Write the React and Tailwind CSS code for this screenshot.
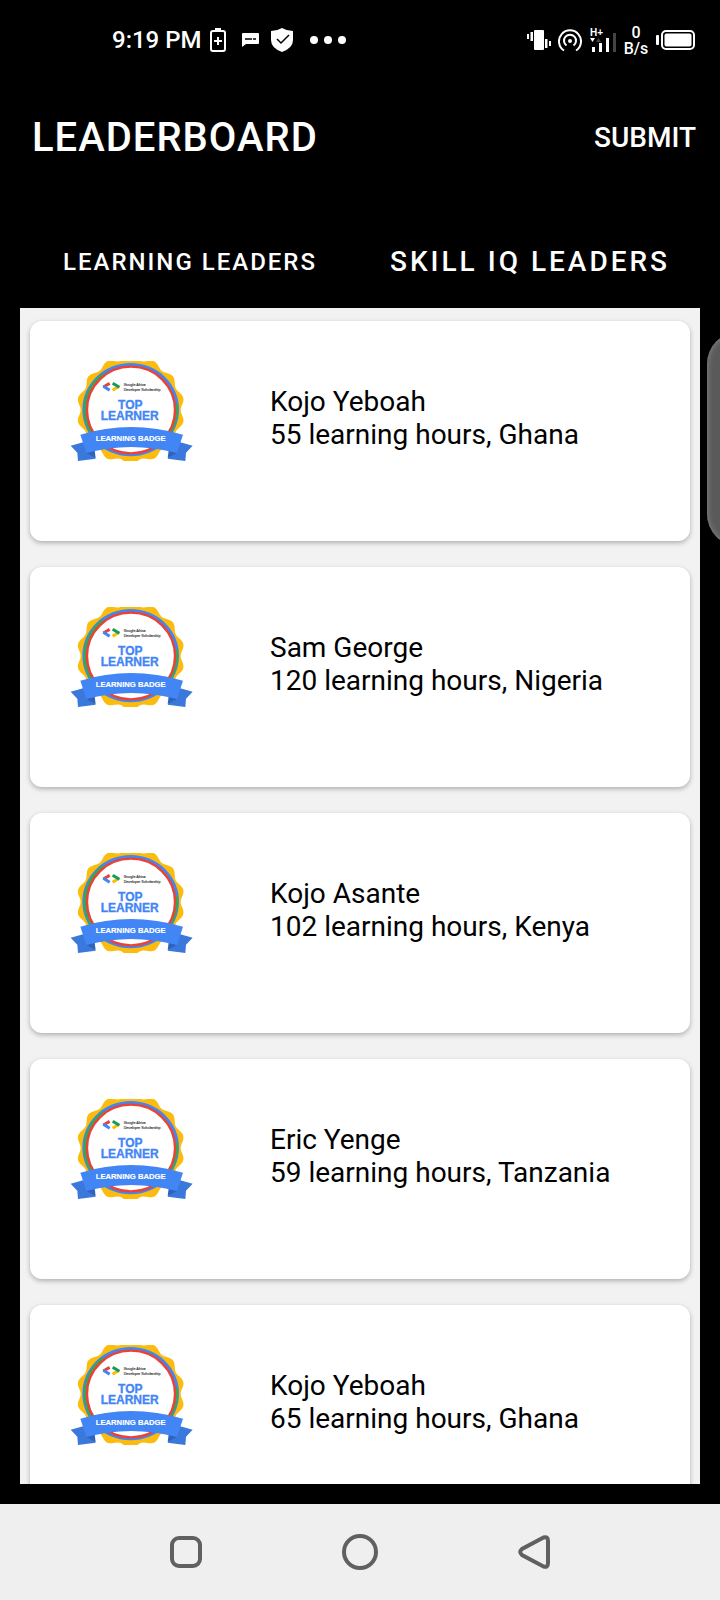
import React from "react";

const learners = [
  { name: "Kojo Yeboah", hours: 55, country: "Ghana" },
  { name: "Sam George", hours: 120, country: "Nigeria" },
  { name: "Kojo Asante", hours: 102, country: "Kenya" },
  { name: "Eric Yenge", hours: 59, country: "Tanzania" },
  { name: "Kojo Yeboah", hours: 65, country: "Ghana" },
];

// Fourteen-lobed edge of the gold seal.
const sealPath =
  Array.from({ length: 281 }, (_, i) => {
    const a = (i / 280) * Math.PI * 2;
    const r = 156 - 6 * Math.cos(14 * a);
    const x = (212 + r * Math.cos(a)).toFixed(1);
    const y = (180 + r * Math.sin(a)).toFixed(1);
    return `${i ? "L" : "M"}${x} ${y}`;
  }).join("") + "Z";

function Badge() {
  return (
    <svg viewBox="30 33 369 300" className="h-[100px] w-[123px] shrink-0" role="img" aria-label="Top Learner learning badge">
      <path d={sealPath} fill="#fcbc0d" />
      <ellipse cx="212" cy="179" rx="145" ry="140" fill="#4285f4" />
      <path d="M130 72A140 135 0 0 0 130 288M349 160A140 135 0 0 1 310 275" fill="none" stroke="#34a853" strokeWidth="7" />
      <ellipse cx="213" cy="180" rx="132" ry="130" fill="#fff" stroke="#ea4335" strokeWidth="7" />
      <g fill="none" strokeWidth="9">
        <path d="M149 100L130 111" stroke="#ea4335" />
        <path d="M130 109L149 121" stroke="#4285f4" />
        <path d="M177 109L158 121" stroke="#fbbc04" />
        <path d="M158 100L178 112" stroke="#0f9d58" />
      </g>
      <g className="font-['Liberation_Sans',sans-serif]">
        <text x="191" y="107" fontSize="11" fill="#333" stroke="#333" strokeWidth="0.4">Google Africa</text>
        <text x="191" y="122" fontSize="11" fill="#333" stroke="#333" strokeWidth="0.4">Developer Scholarship</text>
        <text fontSize="36" fontWeight="700" textAnchor="middle" fill="#4285f4" stroke="#4285f4">
          <tspan x="211" y="177">TOP</tspan>
          <tspan x="209" y="210">LEARNER</tspan>
        </text>
      </g>
      <path d="M32 287L80 274L107 326L54 333L52 308Z" fill="#3b78dc" />
      <path d="M398 287L350 274L323 326L376 333L378 308Z" fill="#3b78dc" />
      <path d="M79 309L104 301L107 324Z" fill="#2f62bb" />
      <path d="M351 309L326 301L323 324Z" fill="#2f62bb" />
      <path d="M61 254Q212 208 369 254L351 309Q212 273 79 309Z" fill="#4285f4" />
      <text x="212" y="273" fontSize="23" fontWeight="700" textAnchor="middle" fill="#fff" stroke="#fff" strokeWidth="0.5" className="font-['Liberation_Sans',sans-serif]">LEARNING BADGE</text>
    </svg>
  );
}

function StatusBar() {
  return (
    <div className="flex h-20 shrink-0 items-center justify-between pr-[25px] pl-28">
      <div className="flex items-center">
        <time className="text-2xl font-medium">9:19 PM</time>
        <svg viewBox="0 0 16 24" className="ml-2 h-6 w-4" aria-hidden="true">
          <path d="M5 0h6v3H5z" fill="#fff" />
          <rect x="1" y="3" width="14" height="20" rx="2" fill="none" stroke="#fff" strokeWidth="2" />
          <path d="M8 9v8M4 13h8" stroke="#fff" strokeWidth="2" />
        </svg>
        <svg viewBox="0 0 17 14" className="ml-4 h-3.5 w-[17px]" aria-hidden="true">
          <path d="M1 0h15q1 0 1 1v9q0 1-1 1H4l-4 3V1q0-1 1-1z" fill="#fff" />
          <path d="M3 6h7M11 6h3" stroke="#000" strokeWidth="1.4" />
        </svg>
        <svg viewBox="0 0 22 24" className="ml-3 h-6 w-[22px]" aria-hidden="true">
          <path d="M11 0Q16 3 22 3V12Q22 20 11 24Q0 20 0 12V3Q6 3 11 0z" fill="#fff" />
          <path d="M6 11l4 4 8-8" fill="none" stroke="#000" strokeWidth="1.5" />
        </svg>
        <svg viewBox="0 0 36 8" className="ml-[17px] h-2 w-9" fill="#fff" aria-hidden="true">
          <circle cx="4" cy="4" r="4" />
          <circle cx="18" cy="4" r="4" />
          <circle cx="32" cy="4" r="4" />
        </svg>
      </div>
      <div className="flex items-center">
        <svg viewBox="0 0 24 22" className="h-[22px] w-6" fill="#fff" aria-hidden="true">
          <rect x="7" y="1" width="10" height="20" rx="1" />
          <path d="M0 5h2v5H0zM3.500 3h2.500v9H3.500zM18 10h2.500v9H18zM22 12h2v5h-2z" />
        </svg>
        <svg viewBox="0 0 24 24" className="ml-[7px] h-6 w-6" fill="none" stroke="#fff" strokeWidth="2" aria-hidden="true">
          <path d="M6 22.500A11 11 0 1 1 18 22.500" />
          <path d="M8.500 17.500A6 6 0 1 1 15.500 17.500" />
          <circle cx="12" cy="13" r="2" fill="#fff" stroke="none" />
        </svg>
        <svg viewBox="0 0 26 24" className="ml-2 h-6 w-[26px] overflow-visible" aria-hidden="true">
          <text x="0" y="8" fontSize="10" fontWeight="700" fill="#fff" className="font-['Liberation_Sans',sans-serif]">H+</text>
          <path d="M0 10h5l-2.500 4z" fill="#fff" />
          <path d="M6 14h5l-2.500-4z" fill="#444" />
          <path d="M2 19h3v5H2zM9 15h3v9H9zM16 10h3v14h-3z" fill="#fff" />
          <path d="M23 5h3v19h-3z" fill="#444" />
        </svg>
        <div className="ml-2 flex w-6 flex-col items-center pt-0.5 text-base leading-4 font-medium">
          <span>0</span>
          <span>B/s</span>
        </div>
        <svg viewBox="0 0 39 20" className="ml-2 h-5 w-[39px]" aria-hidden="true">
          <rect x="0" y="5" width="3" height="10" rx="1" fill="#fff" />
          <rect x="6" y="1" width="32" height="18" rx="4" fill="none" stroke="#fff" strokeWidth="2" />
          <rect x="8.500" y="3.500" width="27" height="13" rx="2" fill="#fff" />
        </svg>
      </div>
    </div>
  );
}

function LearnerCard({ name, hours, country }) {
  return (
    <li className="flex h-[220px] shrink-0 items-start rounded-xl bg-white p-10 shadow-[0_2px_5px_rgba(0,0,0,0.28)]">
      <Badge />
      <div className="mt-6 ml-[77px] text-[28px] leading-[33px] text-black">
        <h2>{name}</h2>
        <p>
          {hours} learning hours, {country}
        </p>
      </div>
    </li>
  );
}

function SystemNav() {
  return (
    <nav aria-label="System" className="flex h-24 shrink-0 items-center justify-center gap-[134px] bg-[#efefef]">
      <button type="button" aria-label="Recent apps">
        <svg viewBox="0 0 40 40" className="h-10 w-10" fill="none" stroke="#606060" strokeWidth="4">
          <rect x="6" y="6" width="28" height="28" rx="7" />
        </svg>
      </button>
      <button type="button" aria-label="Home">
        <svg viewBox="0 0 40 40" className="h-10 w-10" fill="none" stroke="#606060" strokeWidth="4">
          <circle cx="20" cy="20" r="16" />
        </svg>
      </button>
      <button type="button" aria-label="Back">
        <svg viewBox="0 0 40 40" className="h-10 w-10" fill="none" stroke="#606060" strokeWidth="4">
          <path d="M29.500 5.500L8 17Q4.500 20 8 23L29.500 34.500Q34 36 34 31V9Q34 4 29.500 5.500Z" />
        </svg>
      </button>
    </nav>
  );
}

export default function App() {
  return (
    <div className="relative flex h-screen flex-col overflow-hidden bg-black font-[Roboto,sans-serif] text-white">
      <StatusBar />
      <header className="flex h-28 shrink-0 items-center justify-between pt-1 pr-6 pl-8">
        <h1 className="text-[40px] leading-[48px] font-medium tracking-wide">LEADERBOARD</h1>
        <button type="button" className="text-[28px] leading-8 font-medium">SUBMIT</button>
      </header>
      <div role="tablist" className="mx-5 grid h-[116px] shrink-0 grid-cols-2 pt-6">
        <button type="button" role="tab" aria-selected="true" className="text-2xl font-medium tracking-[2px]">LEARNING LEADERS</button>
        <button type="button" role="tab" aria-selected="false" className="text-[28px] leading-8 font-medium tracking-[3px]">SKILL IQ LEADERS</button>
      </div>
      <main className="mx-5 mb-5 min-h-0 flex-1 overflow-hidden bg-[#f2f2f2]">
        <ul className="flex flex-col gap-[26px] px-2.5 py-[13px]">
          {learners.map((learner, i) => (
            <LearnerCard key={i} {...learner} />
          ))}
        </ul>
      </main>
      <SystemNav />
      <div className="absolute top-[332px] right-0 h-[214px] w-[13px] overflow-hidden">
        <div className="h-full w-16 rounded-[32px] bg-[#5a5a5a] shadow-[inset_0_0_6px_#8a8a8a]" />
      </div>
    </div>
  );
}
